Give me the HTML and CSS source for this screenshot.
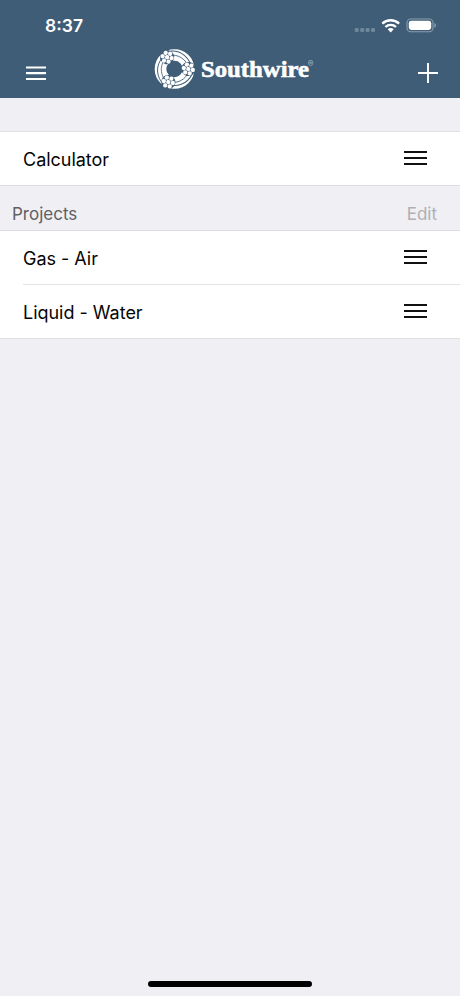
FILE: index.html
```html
<!DOCTYPE html>
<html lang="en">
<head>
    <meta charset="UTF-8">
    <meta name="viewport" content="width=device-width, initial-scale=1.0">
    <title>Southwire</title>
    <link rel="stylesheet" href="styles.css">
</head>
<body>
<header class="header">
    <div class="status">
        <span class="time">8:37</span>
        <svg class="status-icons" width="84" height="18" viewBox="0 0 84 18">
            <!-- signal -->
            <g fill="#6f879b">
                <rect x="2.7" y="10.9" width="4" height="4" rx="1.2"/>
                <rect x="8.2" y="10.9" width="4" height="4" rx="1.2"/>
                <rect x="13.6" y="10.9" width="4" height="4" rx="1.2"/>
                <rect x="19" y="10.9" width="4" height="4" rx="1.2"/>
            </g>
            <!-- wifi -->
            <g fill="none" stroke="#fff" stroke-width="2.4">
                <path d="M30.3 6.6 A12.2 12.2 0 0 1 47.1 6.6"/>
                <path d="M33.4 10 A7.6 7.6 0 0 1 44 10"/>
            </g>
            <path fill="#fff" d="M35.7 12.3 A4.4 4.4 0 0 1 41.7 12.3 L38.7 15.4 Z"/>
            <!-- battery -->
            <rect x="55" y="2" width="26" height="12.7" rx="3.8" fill="none" stroke="#8c9fae" stroke-width="1.1"/>
            <rect x="56.8" y="3.8" width="22.4" height="9.2" rx="2.4" fill="#fff"/>
            <path fill="#8c9fae" d="M82.4 6 Q84 6.8 84 8.4 Q84 10 82.4 10.7 Z"/>
        </svg>
    </div>
    <nav class="nav">
        <svg class="menu" width="20" height="15" viewBox="0 0 20 15">
            <path d="M0 1.5 H20 M0 7.2 H20 M0 13 H20" stroke="#fff" stroke-width="2.2"/>
        </svg>
        <svg class="logo" width="162" height="42" viewBox="0 0 162 42">
            <defs>
                <g id="strand">
                    <circle r="7.1" fill="#3f5d77"/>
                    <g fill="#fff">
                        <circle r="2.15"/>
                        <circle cx="4.6" r="2.15"/>
                        <circle cx="2.3" cy="3.98" r="2.15"/>
                        <circle cx="-2.3" cy="3.98" r="2.15"/>
                        <circle cx="-4.6" r="2.15"/>
                        <circle cx="-2.3" cy="-3.98" r="2.15"/>
                        <circle cx="2.3" cy="-3.98" r="2.15"/>
                    </g>
                </g>
                <g id="swirl" fill="none" stroke="#3f5d77">
                    <path d="M-8 -15 C-18 -8 -19.5 4 -13 13" stroke-width="1"/>
                    <path d="M-8 -12 C-14.5 -5 -15 4 -9 12" stroke-width=".8"/>
                </g>
            </defs>
            <g transform="translate(20.5 21)">
                <circle r="14" fill="none" stroke="#fff" stroke-width="11.6"/>
                <use href="#swirl"/>
                <use href="#swirl" transform="rotate(120)"/>
                <use href="#swirl" transform="rotate(240)"/>
                <use href="#strand" transform="translate(-7.4 -11.8) rotate(12)"/>
                <use href="#strand" transform="translate(13.8 0) rotate(12)"/>
                <use href="#strand" transform="translate(-6.2 13) rotate(12)"/>
            </g>
            <text class="wordmark" x="47" y="29" textLength="108" lengthAdjust="spacingAndGlyphs">Southwire</text>
            <text class="reg" x="153.8" y="18.5">®</text>
        </svg>
        <svg class="plus" width="20" height="20" viewBox="0 0 20 20">
            <path d="M0 10 H20 M10 0 V20" stroke="#fff" stroke-width="1.9"/>
        </svg>
    </nav>
</header>

<main>
    <ul class="list first">
        <li class="row"><span class="name">Calculator</span><i class="handle"></i></li>
    </ul>
    <div class="section">
        <span class="section-title">Projects</span>
        <span class="edit">Edit</span>
    </div>
    <ul class="list">
        <li class="row"><span class="name">Gas - Air</span><i class="handle"></i></li>
        <li class="row"><span class="name">Liquid - Water</span><i class="handle"></i></li>
    </ul>
</main>

<div class="home-bar"></div>
</body>
</html>
```
FILE: styles.css
```css
* {
    box-sizing: border-box;
}

body {
    display: flex;
    flex-direction: column;
    height: 996px;
    margin: 0;
    background: #efeff4;
    color: #050505;
    font-family: Inter, "Liberation Sans", sans-serif;
    overflow: hidden;
}

.header {
    height: 98px;
    background: #3f5d77;
    color: #fff;
}

.status {
    display: flex;
    justify-content: space-between;
    height: 48px;
    padding: 15px 24px 0 45px;
}

.time {
    font-size: 17.5px;
    font-weight: 600;
    line-height: 22px;
}

.status-icons {
    margin-top: 2px;
}

.nav {
    display: flex;
    align-items: center;
    justify-content: space-between;
    height: 50px;
    padding: 0 22px 0 26px;
}

.logo {
    margin: -8px 0 0 6px;
}

.wordmark {
    fill: #fff;
    stroke: #fff;
    stroke-width: .6px;
    font-family: "Liberation Serif", serif;
    font-size: 24px;
    font-weight: bold;
}

.reg {
    fill: #a9b8c4;
    font-size: 8.5px;
}

.list {
    margin: 0;
    padding: 0;
    list-style: none;
    background: #fff;
    border-top: 1px solid #dfdfe3;
    border-bottom: 1px solid #dfdfe3;
}

.first {
    margin-top: 33px;
}

.row {
    display: flex;
    align-items: center;
    justify-content: space-between;
    height: 53px;
    margin-left: 23px;
    padding-right: 33px;
    font-size: 18px;
}

.row + .row {
    height: 54px;
    border-top: 1px solid #e2e2e5;
}

.name {
    padding-top: 2px;
    letter-spacing: -.02px;
}

/* drag handle */
.handle {
    width: 23px;
    height: 14px;
    margin-bottom: 1px;
    background: linear-gradient(#111 0 2px, transparent 2px 6px, #111 6px 8px, transparent 8px 12px, #111 12px);
}

.section {
    display: flex;
    justify-content: space-between;
    height: 44px;
    padding: 17px 23px 0 12px;
    font-size: 17px;
    line-height: 22px;
    color: #606065;
}

.edit {
    color: #b0b0b4;
}

.home-bar {
    width: 164px;
    height: 6px;
    margin: auto auto 9px;
    border-radius: 3px;
    background: #000;
}
```
